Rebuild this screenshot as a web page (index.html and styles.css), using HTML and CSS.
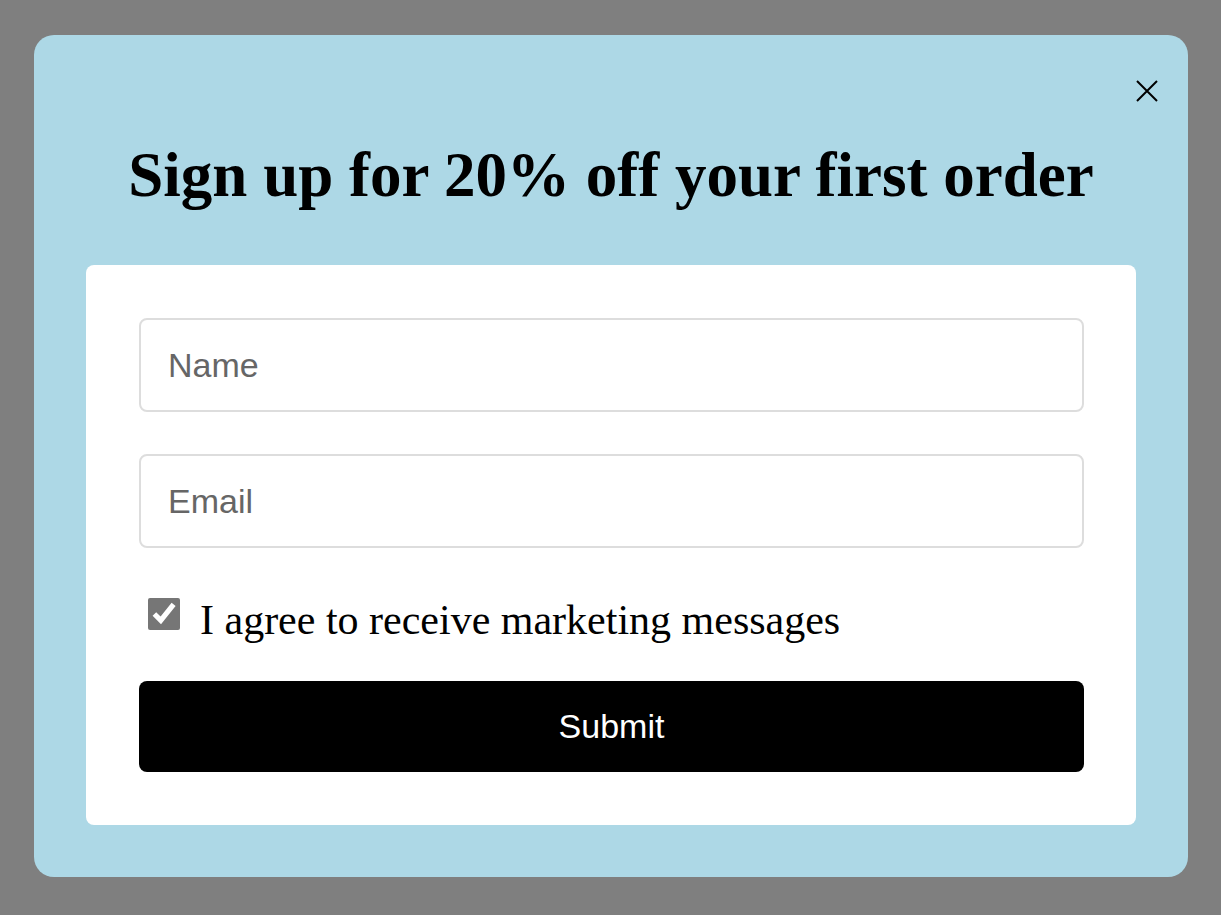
FILE: index.html
```html
<!DOCTYPE html>
<html lang="en">
<head>
    <meta charset="UTF-8">
    <meta name="viewport" content="width=device-width, initial-scale=1.0">
    <title>Sign up</title>
    <link rel="stylesheet" href="styles.css">
</head>
<body>
    <div class="overlay">
        <div class="modal">
            <button class="close-btn" aria-label="Close">
                <svg width="22" height="22" viewBox="0 0 22 22">
                    <path d="M1 1 L21 21 M21 1 L1 21" stroke="#000" stroke-width="2" fill="none"/>
                </svg>
            </button>
            <h1 class="title">Sign up for 20% off your first order</h1>
            <form class="signup-form">
                <input type="text" class="text-input" placeholder="Name">
                <input type="email" class="text-input" placeholder="Email">
                <label class="consent">
                    <input type="checkbox" checked>
                    <span>I agree to receive marketing messages</span>
                </label>
                <button type="submit" class="submit-btn">Submit</button>
            </form>
        </div>
    </div>
</body>
</html>
```

FILE: styles.css
```css
/* base */
html, body {
    margin: 0;
    padding: 0;
    height: 100%;
}

body {
    background: #fff;
    font-family: "Liberation Serif", "Times New Roman", serif;
}

/* dimmed backdrop */
.overlay {
    min-height: 100vh;
    background: rgba(0, 0, 0, 0.5);
    padding: 35px 33px 38px 34px;
    box-sizing: border-box;
}

/* popup */
.modal {
    position: relative;
    background: lightblue;
    border-radius: 20px;
    padding: 52px;
    height: 842px;
    box-sizing: border-box;
}

.close-btn {
    position: absolute;
    top: 45px;
    right: 30px;
    width: 22px;
    height: 22px;
    padding: 0;
    border: none;
    background: none;
    cursor: pointer;
    display: flex;
}

.title {
    margin: 51px 0 53px;
    text-align: center;
    font-size: 63px;
    font-weight: bold;
    line-height: 74px;
    color: #000;
}

/* white card */
.signup-form {
    background: #fff;
    border-radius: 8px;
    padding: 53px 52px 53px 53px;
    display: flex;
    flex-direction: column;
}

.text-input {
    height: 94px;
    padding: 0 27px;
    border: 2px solid #ddd;
    border-radius: 8px;
    font-family: "Liberation Sans", Arial, sans-serif;
    font-size: 34px;
    color: #333;
    box-sizing: border-box;
    margin-bottom: 42px;
    outline: none;
}

.text-input::placeholder {
    color: #666;
}

.consent {
    display: flex;
    align-items: center;
    gap: 20px;
    padding-left: 9px;
    font-size: 42px;
    line-height: 48px;
    margin-bottom: 37px;
}

.consent span {
    padding-top: 6px;
}

.consent input {
    width: 32px;
    height: 32px;
    margin: 0 0 6px;
    accent-color: #767676;
}

.submit-btn {
    height: 91px;
    border: none;
    border-radius: 8px;
    background: #000;
    color: #fff;
    font-family: "Liberation Sans", Arial, sans-serif;
    font-size: 34px;
    cursor: pointer;
}
```
